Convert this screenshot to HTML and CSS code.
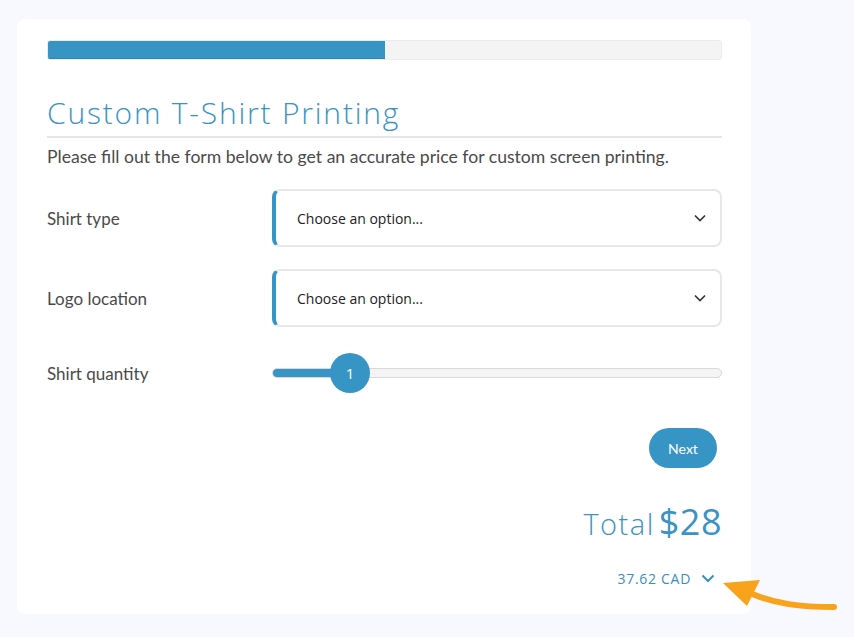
FILE: index.html
```html
<!DOCTYPE html>
<html>
<head>
<meta charset="utf-8">
<link rel="stylesheet" href="styles.css">
</head>
<body>
<div class="card">
  <div class="progress"><div class="progress-fill" style="width:50%"></div></div>
  <h1 class="title">Custom T-Shirt Printing</h1>
  <p class="intro">Please fill out the form below to get an accurate price for custom screen printing.</p>
  <div class="row">
    <div class="label">Shirt type</div>
    <div class="select"><span>Choose an option...</span>
      <svg class="chev" width="12" height="8" viewBox="0 0 12 8"><path d="M1 1.5l5 5 5-5" fill="none" stroke="#333" stroke-width="1.6"/></svg>
    </div>
  </div>
  <div class="row">
    <div class="label">Logo location</div>
    <div class="select"><span>Choose an option...</span>
      <svg class="chev" width="12" height="8" viewBox="0 0 12 8"><path d="M1 1.5l5 5 5-5" fill="none" stroke="#333" stroke-width="1.6"/></svg>
    </div>
  </div>
  <div class="row slider-row">
    <div class="label">Shirt quantity</div>
    <div class="slider">
      <div class="track"><div class="track-fill" style="width:78px"></div></div>
      <div class="thumb" style="left:58px">1</div>
    </div>
  </div>
  <div class="actions"><button class="next">Next</button></div>
  <div class="total"><span class="total-label">Total</span><span class="total-value">$28</span></div>
  <div class="cad"><span>37.62 CAD</span>
    <svg width="14" height="9" viewBox="0 0 14 9"><path d="M1.5 1.5l5.5 5.5 5.5-5.5" fill="none" stroke="#3a8fc0" stroke-width="2"/></svg>
  </div>
</div>
<svg class="arrow" width="130" height="50" viewBox="0 0 130 50">
  <path d="M114 35 C 80 35, 55 32, 30 21" fill="none" stroke="#f9a21b" stroke-width="6" stroke-linecap="round"/>
  <path d="M3 11 L 40 8 L 27 34 Z" fill="#f9a21b"/>
</svg>
</body>
</html>
```
FILE: styles.css
```css
html, body { margin: 0; padding: 0; }
body {
  background: #f7f9fe;
  width: 854px;
  height: 637px;
  overflow: hidden;
  position: relative;
  font-family: "Open Sans", sans-serif;
}
.card {
  margin: 19px 0 0 17px;
  width: 734px;
  height: 595px;
  box-sizing: border-box;
  background: #fff;
  border-radius: 8px;
  padding: 21px 29px 0 30px;
}
.progress {
  height: 20px;
  background: #f4f4f4;
  border: 1px solid #ebebeb;
  box-sizing: border-box;
  border-radius: 3px;
  overflow: hidden;
}
.progress-fill {
  height: 100%;
  background: #3795c6;
  border-bottom: 1px solid #2f86b4;
  box-sizing: border-box;
}
.title {
  margin: 33px 0 0;
  font-family: "Open Sans", sans-serif;
  font-weight: 300;
  font-size: 30px;
  letter-spacing: 1.8px;
  line-height: 40px;
  color: #3b93c5;
  padding-bottom: 3px;
  border-bottom: 2px solid #e6e6e6;
}
.intro {
  margin: 7px 0 0;
  font-family: "Lato", sans-serif;
  font-size: 17.6px;
  line-height: 24px;
  color: #4a4a4a;
}
.row {
  display: flex;
  align-items: center;
  margin-top: 20px;
}
.row + .row { margin-top: 22px; }
.label {
  width: 225px;
  flex: none;
  font-family: "Lato", sans-serif;
  font-size: 17px;
  color: #4a4a4a;
}
.select {
  flex: 1;
  height: 58px;
  box-sizing: border-box;
  border: 2px solid #e8e8e8;
  border-left: 4px solid #3795c6;
  border-radius: 8px;
  display: flex;
  align-items: center;
  justify-content: space-between;
  padding: 0 14px 0 21px;
  font-family: "Open Sans", sans-serif;
  font-size: 14px;
  color: #222;
}
.slider-row { margin-top: 20px; height: 48px; }
.slider { flex: 1; position: relative; height: 40px; display: flex; align-items: center; }
.track {
  width: 100%;
  height: 10px;
  box-sizing: border-box;
  background: #f4f4f4;
  border: 1px solid #d9d9d9;
  border-radius: 5px;
  overflow: hidden;
}
.track-fill { height: 100%; background: #3795c6; }
.thumb {
  position: absolute;
  top: 0;
  width: 40px;
  height: 40px;
  border-radius: 50%;
  background: #3795c6;
  color: #fff;
  font-family: "Open Sans", sans-serif;
  font-size: 15px;
  display: flex;
  align-items: center;
  justify-content: center;
}
.actions { display: flex; justify-content: flex-end; margin-top: 31px; padding-right: 5px; }
.next {
  width: 68px;
  height: 40px;
  border: none;
  border-radius: 20px;
  background: #3795c6;
  color: #fff;
  font-family: "Lato", sans-serif;
  font-size: 14px;
  padding: 0;
}
.total {
  display: flex;
  justify-content: flex-end;
  align-items: baseline;
  gap: 4px;
  margin-top: 29px;
  color: #3b93c5;
  font-family: "Open Sans", sans-serif;
}
.total-label { font-size: 29px; font-weight: 300; letter-spacing: 1.5px; }
.total-value { font-size: 36px; font-weight: 500; letter-spacing: 0.5px; }
.cad {
  display: flex;
  justify-content: flex-end;
  align-items: center;
  gap: 10px;
  margin-top: 23px;
  padding-right: 7px;
  font-family: "Open Sans", sans-serif;
  font-size: 14px;
  letter-spacing: 0.7px;
  color: #3a8fc0;
}
.arrow { position: absolute; left: 720px; top: 572px; }
```
